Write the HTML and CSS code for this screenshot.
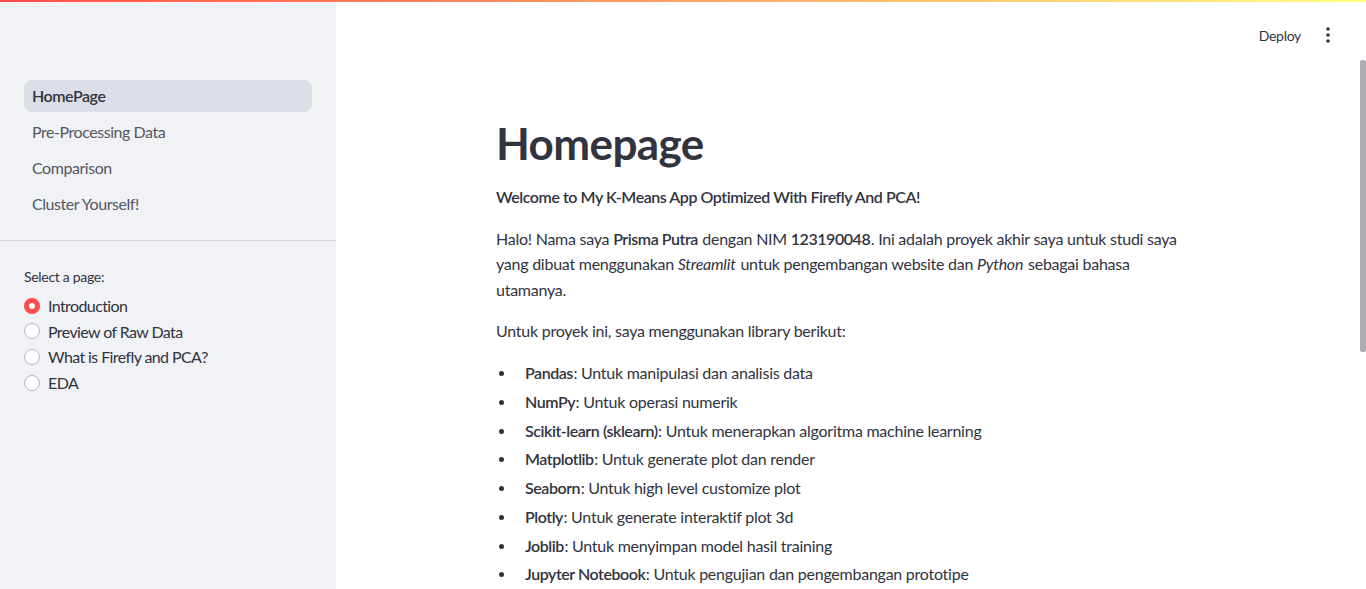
FILE: index.html
```html
<!DOCTYPE html>
<html lang="en">
<head>
<meta charset="utf-8">
<title>Homepage</title>
<link rel="stylesheet" href="styles.css">
</head>
<body>
<div class="decoration"></div>
<div class="app">
  <aside class="sidebar">
    <nav class="nav">
      <a class="nav-item active">HomePage</a>
      <a class="nav-item">Pre-Processing Data</a>
      <a class="nav-item">Comparison</a>
      <a class="nav-item">Cluster Yourself!</a>
    </nav>
    <div class="sidebar-body">
      <div class="radio-label">Select a page:</div>
      <div class="radio-group">
        <label class="radio checked"><span class="dot"></span><span>Introduction</span></label>
        <label class="radio"><span class="dot"></span><span>Preview of Raw Data</span></label>
        <label class="radio"><span class="dot"></span><span>What is Firefly and PCA?</span></label>
        <label class="radio"><span class="dot"></span><span>EDA</span></label>
      </div>
    </div>
  </aside>
  <main class="main">
    <header class="header">
      <span class="deploy">Deploy</span>
      <span class="kebab"><svg width="4" height="16" viewBox="0 0 4 16"><circle cx="2" cy="2" r="1.8" fill="#31333f"/><circle cx="2" cy="8" r="1.8" fill="#31333f"/><circle cx="2" cy="14" r="1.8" fill="#31333f"/></svg></span>
    </header>
    <div class="scroll">
      <div class="block">
        <h1>Homepage</h1>
        <p><strong>Welcome to My K-Means App Optimized With Firefly And PCA!</strong></p>
        <p>Halo! Nama saya <strong>Prisma Putra</strong> dengan NIM <strong>123190048</strong>. Ini adalah proyek akhir saya untuk studi saya yang dibuat menggunakan <em>Streamlit</em> untuk pengembangan website dan <em>Python</em> sebagai bahasa utamanya.</p>
        <p>Untuk proyek ini, saya menggunakan library berikut:</p>
        <ul>
          <li><span><strong>Pandas</strong>: Untuk manipulasi dan analisis data</span></li>
          <li><span><strong>NumPy</strong>: Untuk operasi numerik</span></li>
          <li><span><strong>Scikit-learn (sklearn)</strong>: Untuk menerapkan algoritma machine learning</span></li>
          <li><span><strong>Matplotlib</strong>: Untuk generate plot dan render</span></li>
          <li><span><strong>Seaborn</strong>: Untuk high level customize plot</span></li>
          <li><span><strong>Plotly</strong>: Untuk generate interaktif plot 3d</span></li>
          <li><span><strong>Joblib</strong>: Untuk menyimpan model hasil training</span></li>
          <li><span><strong>Jupyter Notebook</strong>: Untuk pengujian dan pengembangan prototipe</span></li>
        </ul>
      </div>
    </div>
    <div class="scroll-thumb"></div>
  </main>
</div>
</body>
</html>
```

FILE: styles.css
```css
* { box-sizing: border-box; }
html, body { margin: 0; padding: 0; height: 100%; overflow: hidden; }
body {
  font-family: Lato, "Noto Sans", sans-serif;
  color: #31333f;
  background: #fff;
  letter-spacing: -0.25px;
}
.decoration {
  height: 2px;
  background: linear-gradient(90deg, #ff4b4b, #fffd80);
}
.app {
  display: flex;
  height: calc(100% - 2px);
}
.sidebar {
  width: 336px;
  flex: none;
  background: #f0f2f6;
  display: flex;
  flex-direction: column;
}
.nav {
  display: flex;
  flex-direction: column;
  gap: 4px;
  padding: 78px 24px 20px;
  border-bottom: 1px solid #d5d7dc;
}
.nav-item {
  height: 32px;
  line-height: 32px;
  padding: 0 8px;
  border-radius: 8px;
  font-size: 16px;
  color: #555763;
  letter-spacing: -0.45px;
}
.nav-item.active {
  background: #dadee7;
  color: #31333f;
  font-weight: 600;
}
.sidebar-body { padding: 27px 24px 0; }
.radio-label { font-size: 14px; line-height: 18px; margin-bottom: 7px; letter-spacing: -0.3px; }
.radio-group { display: flex; flex-direction: column; }
.radio {
  display: flex;
  align-items: center;
  gap: 8px;
  height: 25.6px;
  font-size: 16px;
  letter-spacing: -0.6px;
}
.dot {
  width: 16px;
  height: 16px;
  border-radius: 50%;
  border: 1px solid #b4b6bd;
  background: #fff;
  flex: none;
}
.radio.checked .dot {
  border: 5px solid #ff4b4b;
  background: #fff;
}
.main {
  flex: 1;
  display: flex;
  flex-direction: column;
  min-width: 0;
  position: relative;
}
.header {
  height: 66px;
  flex: none;
  display: flex;
  align-items: center;
  justify-content: flex-end;
  padding-right: 36px;
  gap: 25px;
}
.deploy { font-size: 14px; color: #31333f; letter-spacing: -0.3px; }
.kebab { display: flex; align-items: center; }
.scroll {
  flex: 1;
  overflow: hidden;
  padding-right: 6px;
}
.scroll-thumb {
  position: absolute;
  right: 0;
  top: 58px;
  width: 6px;
  height: 292px;
  background: #acacb2;
  border-radius: 2px;
}
.block {
  max-width: 704px;
  margin: 0 auto;
  padding: 49px 0 0;
  font-size: 16px;
  line-height: 25.6px;
}
h1 {
  margin: 0 0 15px;
  font-size: 44px;
  line-height: 52px;
  font-weight: 700;
  letter-spacing: -0.6px;
}
p { margin: 0 0 16px; }
strong { font-weight: 600; letter-spacing: -0.45px; padding-right: 0.5px; }
em { padding-right: 1px; }
ul { margin: 0; padding: 0; list-style: none; }
li { margin: 0 0 3.2px; display: flex; }
li::before {
  content: "";
  flex: none;
  width: 5px;
  height: 5px;
  border-radius: 50%;
  background: #31333f;
  margin: 11px 21px 0 3px;
}
```
